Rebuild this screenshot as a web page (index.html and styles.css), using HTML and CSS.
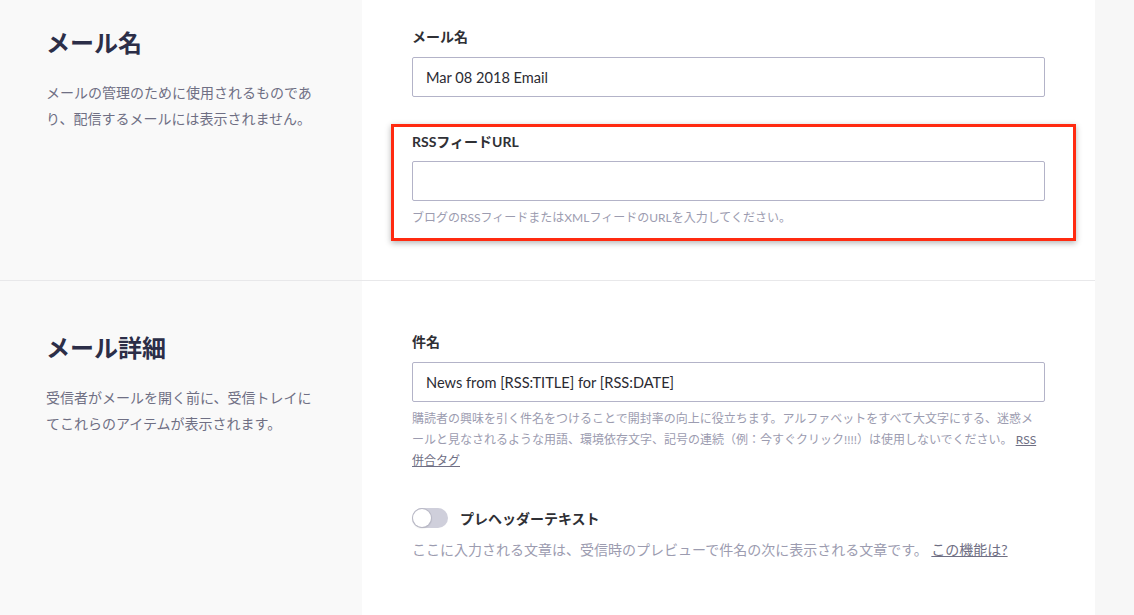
FILE: index.html
```html
<!DOCTYPE html>
<html lang="ja">
<head>
<meta charset="UTF-8" />
<meta name="viewport" content="width=device-width, initial-scale=1" />
<title>メール設定</title>
<link rel="stylesheet" href="styles.css">
</head>
<body>
<div class="page">

  <section class="section section-first">
    <div class="section-info">
      <h2>メール名</h2>
      <p>メールの管理のために使用されるものであり、配信するメールには表示されません。</p>
    </div>
    <div class="section-fields">
      <div class="field">
        <label for="emailName">メール名</label>
        <input type="text" id="emailName" value="Mar 08 2018 Email" />
      </div>
      <div class="field field-highlight">
        <label for="rssUrl">RSSフィードURL</label>
        <input type="text" id="rssUrl" />
        <p class="help">ブログのRSSフィードまたはXMLフィードのURLを入力してください。</p>
      </div>
    </div>
  </section>

  <section class="section">
    <div class="section-info">
      <h2>メール詳細</h2>
      <p>受信者がメールを開く前に、受信トレイにてこれらのアイテムが表示されます。</p>
    </div>
    <div class="section-fields">
      <div class="field">
        <label for="subject">件名</label>
        <input type="text" id="subject" value="News from [RSS:TITLE] for [RSS:DATE]" />
        <p class="help help-long">購読者の興味を引く件名をつけることで開封率の向上に役立ちます。アルファベットをすべて大文字にする、迷惑メールと見なされるような用語、環境依存文字、記号の連続（例：今すぐクリック!!!!）は使用しないでください。 <a href="#">RSS</a><br><a href="#">併合タグ</a></p>
      </div>
      <div class="field field-toggle">
        <div class="toggle-row">
          <span class="toggle"><span class="knob"></span></span>
          <span class="toggle-label">プレヘッダーテキスト</span>
        </div>
        <p class="help help-large">ここに入力される文章は、受信時のプレビューで件名の次に表示される文章です。 <a href="#">この機能は?</a></p>
      </div>
    </div>
  </section>

</div>
</body>
</html>
```

FILE: styles.css
```css
:root {
  --heading-color: #2c2e48;
  --label-color: #2f3035;
  --text-muted: #6f6f84;
  --text-help: #9c9cb0;
  --input-border: #b3b3c8;
  --info-bg: #f9f9f9;
  --page-bg: #f7f7f7;
  --divider: #e8e8ea;
  --alert: #ff2a10;
}
body {
  margin: 0;
  background: var(--page-bg);
  font-family: "Lato", "Noto Sans CJK JP", sans-serif;
  color: var(--label-color);
  overflow: hidden;
}
.page {
  width: 1095px;
}
.section {
  display: grid;
  grid-template-columns: 362px 1fr;
  border-bottom: 1px solid var(--divider);
}
.section-info {
  background: var(--info-bg);
  padding: 51px 0 0 46px;
}
.section-first .section-info {
  padding-top: 27px;
}
.section-info h2 {
  margin: 0 0 21px 0;
  font-size: 24px;
  line-height: 32px;
  font-weight: 700;
  color: var(--heading-color);
}
.section-info p {
  margin: 0;
  width: 270px;
  font-size: 14px;
  line-height: 26px;
  color: var(--text-muted);
}
.section-fields {
  background: white;
  padding: 51px 50px 120px 50px;
}
.section-first .section-fields {
  padding-top: 27px;
  padding-bottom: 39px;
}
.field label {
  display: block;
  font-size: 14px;
  line-height: 20px;
  font-weight: 700;
  margin-bottom: 10px;
  color: var(--label-color);
}
.field input {
  display: block;
  width: 100%;
  height: 40px;
  box-sizing: border-box;
  border: 1px solid var(--input-border);
  border-radius: 2px;
  padding: 0 13px;
  font-family: inherit;
  font-size: 14.6px;
  color: #2b2b33;
  background: white;
  outline: none;
}
.field-highlight {
  margin: 27px -31px 0 -21px;
  padding: 5px 28px 11px 18px;
  border: 3px solid var(--alert);
  box-shadow: 0 2px 6px rgba(0,0,0,0.3);
}
.field-highlight label {
  margin-bottom: 9px;
}
.help {
  margin: 8px 0 0 0;
  font-size: 12px;
  line-height: 18px;
  color: var(--text-help);
}
.help-long {
  margin-top: 6px;
  line-height: 21px;
}
.help-large {
  margin-top: 11px;
  font-size: 14px;
  line-height: 22px;
}
.help a {
  color: var(--text-muted);
  text-decoration: underline;
}
.field-toggle {
  margin-top: 37px;
}
.toggle-row {
  display: flex;
  align-items: center;
  gap: 12px;
  height: 20px;
}
.toggle {
  position: relative;
  width: 36px;
  height: 20px;
  border-radius: 10px;
  background: #cfcfdb;
  flex-shrink: 0;
}
.toggle .knob {
  position: absolute;
  left: 1px;
  top: 1px;
  width: 18px;
  height: 18px;
  border-radius: 50%;
  background: white;
  box-shadow: 0 0 0 1px #b9b9c6, 0 1px 2px rgba(0,0,0,0.2);
}
.toggle-label {
  font-size: 14px;
  font-weight: 700;
  color: var(--label-color);
}
```
